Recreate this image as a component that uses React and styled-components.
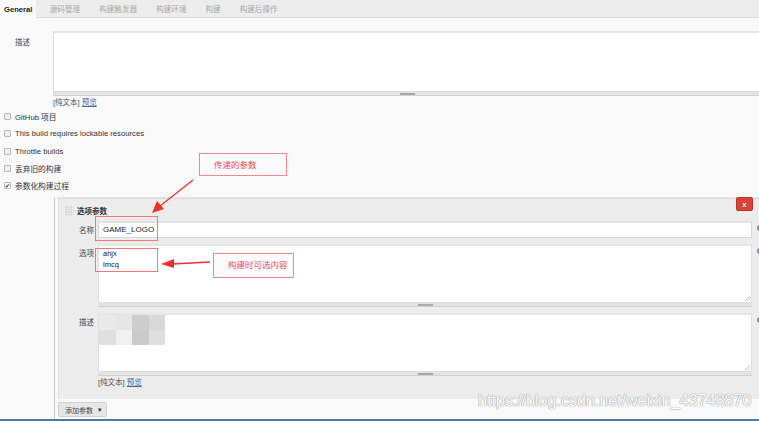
import React from "react";
import styled, { createGlobalStyle } from "styled-components";

const GlobalStyle = createGlobalStyle`
  html, body {
    margin: 0;
    padding: 0;
    background: #f9f9f9;
    overflow: hidden;
  }
  body {
    font-family: "Liberation Sans", "Noto Sans CJK SC", sans-serif;
    font-size: 7.5px;
    color: #333;
  }
`;

const tabs = ["源码管理", "构建触发器", "构建环境", "构建", "构建后操作"];
const checks = [
  { label: "GitHub 项目", checked: false },
  { label: "This build requires lockable resources", checked: false },
  { label: "Throttle builds", checked: false },
  { label: "丢弃旧的构建", checked: false },
  { label: "参数化构建过程", checked: true },
];
const blurCells = [
  "#e9e9e9", "#e6e6e6", "#cdcdcd", "#d8d8d8",
  "#e0e0e0", "#f0f0f0", "#cbcbcb", "#dedede",
];

const ResizeCorner = () => (
  <Corner width="6" height="6" viewBox="0 0 6 6">
    <path d="M1 6 L6 1 M3.5 6 L6 3.5" stroke="#b0b0b0" strokeWidth="0.8" />
  </Corner>
);

const GridHandle = () => (
  <svg width="8" height="10" viewBox="0 0 8 10">
    {[0, 1, 2, 3].map((r) =>
      [0, 1, 2].map((c) => (
        <rect key={`${r}-${c}`} x={c * 2.6} y={r * 2.5} width="2" height="2" fill="#dadada" />
      ))
    )}
  </svg>
);

const TextBox = ({ height, bleed, children }) => (
  <Bleed $bleed={bleed}>
    <Area $h={height}>
      {children}
      {!bleed && <ResizeCorner />}
    </Area>
    <Grip $bleed={bleed}>
      <span />
    </Grip>
  </Bleed>
);

const HelpLine = () => (
  <Help>
    [纯文本] <a>预览</a>
  </Help>
);

const App = () => {
  return (
    <Page>
      <GlobalStyle />
      <TabBar>
        <Tab $active>General</Tab>
        {tabs.map((t) => (
          <Tab key={t}>{t}</Tab>
        ))}
      </TabBar>

      <Content>
        <FieldRow>
          <TopLabel>描述</TopLabel>
          <div>
            <TextBox height={61} bleed />
            <HelpLine />
          </div>
        </FieldRow>

        <CheckList>
          {checks.map((c) => (
            <CheckRow key={c.label}>
              <Box $checked={c.checked}>{c.checked && "✔"}</Box>
              {c.label}
            </CheckRow>
          ))}
        </CheckList>

        <Params>
          <Panel>
            <PanelHead>
              <GridHandle />
              <span>选项参数</span>
              <CloseBtn>x</CloseBtn>
            </PanelHead>

            <ParamRow>
              <ParamLabel>名称</ParamLabel>
              <Input>GAME_LOGO</Input>
              <HelpDot />
            </ParamRow>

            <ParamRow $gap={6}>
              <ParamLabel>选项</ParamLabel>
              <TextBox height={59}>
                <Lines>
                  ahjx
                  <br />
                  lmcq
                </Lines>
              </TextBox>
              <HelpDot />
            </ParamRow>

            <ParamRow $gap={6}>
              <ParamLabel>描述</ParamLabel>
              <div>
                <TextBox height={59}>
                  <Blur>
                    {blurCells.map((c, i) => (
                      <span key={i} style={{ background: c }} />
                    ))}
                  </Blur>
                </TextBox>
                <HelpLine />
              </div>
              <HelpDot />
            </ParamRow>
          </Panel>

          <Footer>
            <AddBtn>
              添加参数 <Caret>▾</Caret>
            </AddBtn>
          </Footer>
        </Params>
      </Content>
      <BottomLine />

      <Mark $x={95} $y={216} $w={63} $h={25} />
      <Mark $x={95} $y={248} $w={63} $h={24} />
      <Callout $x={199} $y={153} $w={88} $h={23}>传递的参数</Callout>
      <Callout $x={213} $y={253} $w={81} $h={25}>构建时可选内容</Callout>
      <Arrows width="759" height="421" viewBox="0 0 759 421">
        <line x1="193" y1="180" x2="160" y2="206" stroke="#e8302e" strokeWidth="1.3" />
        <polygon points="152,213 157,201 164,209" fill="#e8302e" />
        <line x1="210" y1="262" x2="172" y2="264" stroke="#e8302e" strokeWidth="1.3" />
        <polygon points="161,264 174,259 174,268" fill="#e8302e" />
      </Arrows>
      <Watermark>https://blog.csdn.net/weixin_43748870</Watermark>
    </Page>
  );
};

const Page = styled.div`
  position: relative;
  width: 759px;
  height: 421px;
  overflow: hidden;
  background: #f9f9f9;
`;

const TabBar = styled.div`
  display: flex;
  height: 17px;
  background: #ececec;
  border-bottom: 1px solid #dcdcdc;
`;

const Tab = styled.div`
  display: flex;
  align-items: center;
  padding: ${(p) => (p.$active ? "0 4px" : "0 9.5px")};
  margin-right: ${(p) => (p.$active ? "4px" : "0")};
  height: ${(p) => (p.$active ? "18px" : "17px")};
  background: ${(p) => (p.$active ? "#f9f9f9" : "transparent")};
  color: ${(p) => (p.$active ? "#222" : "#a8a8a8")};
  font-weight: ${(p) => (p.$active ? "bold" : "normal")};
  font-size: 7.6px;
`;

const Content = styled.div`
  padding-top: 13px;
`;

const FieldRow = styled.div`
  display: grid;
  grid-template-columns: 53px 1fr;
`;

const TopLabel = styled.div`
  padding: 5px 0 0 15px;
  color: #444;
`;

const Bleed = styled.div`
  margin-right: ${(p) => (p.$bleed ? "-3px" : "0")};
`;

const Area = styled.div`
  position: relative;
  box-sizing: border-box;
  height: ${(p) => p.$h}px;
  background: #fff;
  border: 1px solid #dedede;
  border-top: 2px solid #e6e6e6;
`;

const Corner = styled.svg`
  position: absolute;
  right: 1px;
  bottom: 1px;
`;

const Grip = styled.div`
  display: flex;
  justify-content: center;
  height: 3px;
  background: #e2e2e2;
  border-bottom: 1px solid #d2d2d2;
  span {
    width: 15px;
    height: 2px;
    margin-top: 1px;
    background: #a9a9a9;
  }
`;

const Help = styled.div`
  margin-top: 2px;
  color: #555;
  font-size: 7.5px;
  line-height: 9px;
  a {
    color: #3b6aa6;
    text-decoration: underline;
  }
`;

const CheckList = styled.div`
  margin-top: 1px;
`;

const CheckRow = styled.div`
  display: flex;
  align-items: center;
  height: 17.3px;
  padding-left: 4px;
  gap: 4px;
  color: #333;
  font-size: 7.7px;
`;

const Box = styled.span`
  display: inline-flex;
  align-items: center;
  justify-content: center;
  box-sizing: border-box;
  width: 7px;
  height: 7px;
  border: 1px solid #b9b9b9;
  border-radius: 1px;
  background: ${(p) => (p.$checked ? "#fff" : "#eee")};
  font-size: 6px;
  color: #222;
  line-height: 1;
`;

const Params = styled.div`
  margin: 3px 0 0 54px;
  border-left: 1px solid #cfcfcf;
  border-top: 1px solid #e6e6e6;
  padding-left: 3px;
`;

const Panel = styled.div`
  position: relative;
  height: 200px;
  background: #ececec;
  border-top: 1px solid #dadada;
  border-left: 1px solid #e2e2e2;
`;

const PanelHead = styled.div`
  display: flex;
  align-items: center;
  gap: 4px;
  height: 22px;
  padding: 1px 0 0 6px;
  box-sizing: border-box;
  font-weight: bold;
  color: #333;
  font-size: 7.5px;
`;

const CloseBtn = styled.div`
  position: absolute;
  right: 6px;
  top: -2px;
  width: 17px;
  height: 14px;
  background: #d54436;
  border: 1px solid #b83427;
  border-radius: 2px;
  box-sizing: border-box;
  color: #fff;
  font-weight: bold;
  font-size: 7px;
  display: flex;
  align-items: center;
  justify-content: center;
`;

const ParamRow = styled.div`
  display: grid;
  grid-template-columns: 37px 654px 8px;
  column-gap: 2px;
  margin-top: ${(p) => p.$gap || 0}px;
`;

const ParamLabel = styled.div`
  text-align: right;
  padding: 3px 2px 0 0;
  color: #444;
`;

const Input = styled.div`
  box-sizing: border-box;
  height: 17px;
  background: #fff;
  border: 1px solid #d8d8d8;
  border-top: 2px solid #e2e2e2;
  padding: 2px 0 0 4px;
  font-size: 8px;
  color: #222;
`;

const HelpDot = styled.span`
  width: 6px;
  height: 6px;
  margin: 4px 0 0 3px;
  border-radius: 50%;
  background: #6f8fbf;
`;

const Lines = styled.div`
  padding: 3px 0 0 4px;
  font-size: 7.5px;
  line-height: 10.5px;
  color: #222;
`;

const Blur = styled.div`
  display: grid;
  grid-template-columns: repeat(4, 16.5px);
  grid-template-rows: repeat(2, 15px);
  span {
    display: block;
  }
`;

const Footer = styled.div`
  padding: 3px 0 4px 0;
`;

const AddBtn = styled.div`
  display: inline-flex;
  align-items: center;
  gap: 5px;
  height: 15px;
  padding: 0 4px 0 6px;
  box-sizing: border-box;
  background: #e6e6e6;
  border: 1px solid #d0d0d0;
  border-radius: 2px;
  color: #444;
  font-size: 7px;
`;

const Caret = styled.span`
  font-size: 7px;
  color: #333;
`;

const BottomLine = styled.div`
  position: absolute;
  left: 0;
  right: 0;
  bottom: 0;
  height: 2px;
  background: #4e78ad;
`;

const Mark = styled.div`
  position: absolute;
  left: ${(p) => p.$x}px;
  top: ${(p) => p.$y}px;
  width: ${(p) => p.$w}px;
  height: ${(p) => p.$h}px;
  box-sizing: border-box;
  border: 1px solid #f07878;
`;

const Callout = styled.div`
  position: absolute;
  left: ${(p) => p.$x}px;
  top: ${(p) => p.$y}px;
  width: ${(p) => p.$w}px;
  height: ${(p) => p.$h}px;
  box-sizing: border-box;
  border: 1px solid #f08a8a;
  background: #fbfbfb;
  color: #e8484a;
  font-size: 8.5px;
  padding: 4px 0 0 14px;
`;

const Arrows = styled.svg`
  position: absolute;
  left: 0;
  top: 0;
  pointer-events: none;
`;

const Watermark = styled.div`
  position: absolute;
  left: 478px;
  top: 391px;
  font-family: "Liberation Sans", sans-serif;
  font-size: 16.5px;
  color: rgba(255, 255, 255, 0.95);
  text-shadow: 0 0 1px #aaa, 0 0 1px #aaa, 0 0 1px #aaa;
  letter-spacing: -0.2px;
`;

export default App;
